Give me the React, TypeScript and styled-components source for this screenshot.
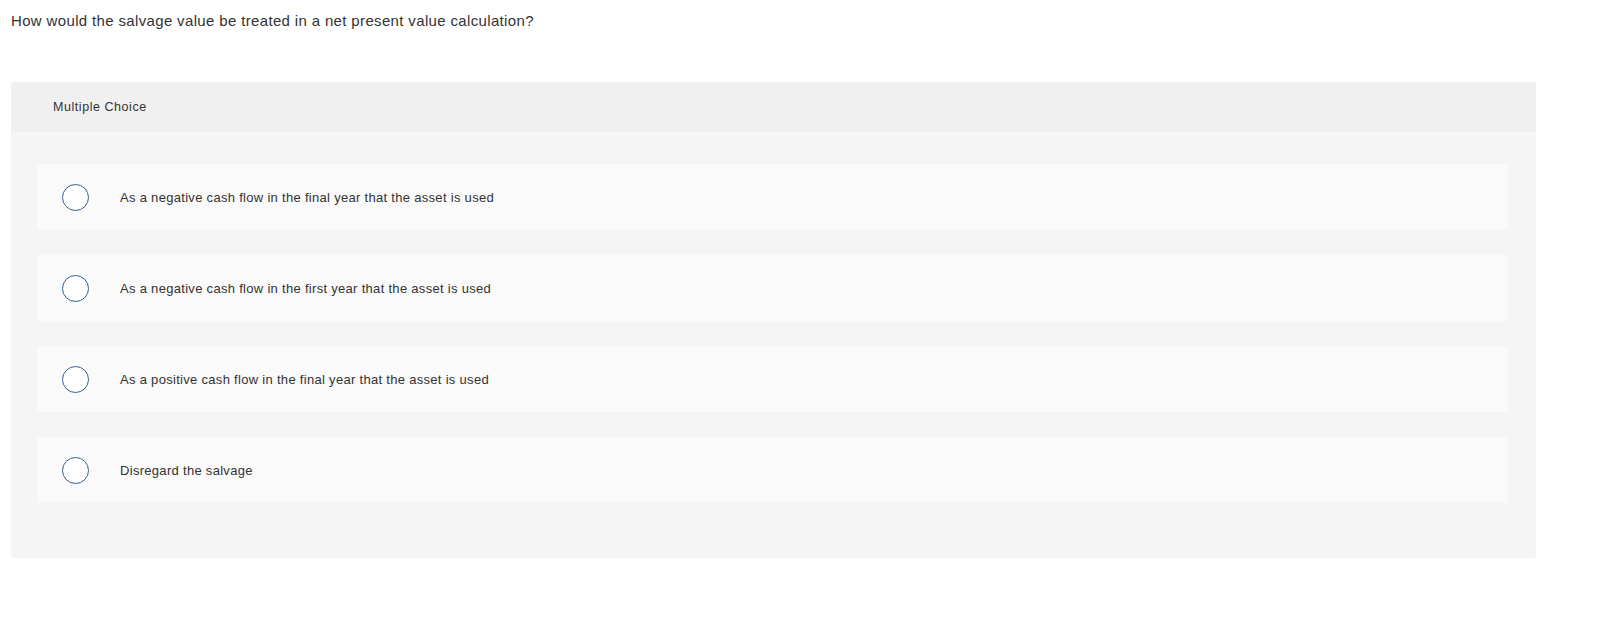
import styled, {createGlobalStyle} from 'styled-components'

const GlobalStyle = createGlobalStyle`
  body {
    margin: 0;
    background: #ffffff;
    font-family: "Liberation Sans", Arial, sans-serif;
    color: #333333;
  }
`

const Page = styled.main`
  padding: 11px 79px 0 11px;
`

const Question = styled.p`
  margin: 0 0 51px;
  font-size: 15px;
  line-height: 20px;
  letter-spacing: 0.35px;
  color: #333333;
`

const Panel = styled.section`
  background: #f5f5f5;
  border-radius: 2px;
  overflow: hidden;
  padding-bottom: 55px;
`

const Header = styled.div`
  height: 50px;
  display: flex;
  align-items: center;
  padding-left: 42px;
  background: #f0f0f0;
  font-size: 12.5px;
  letter-spacing: 0.55px;
  color: #333333;
`

const Choices = styled.ul`
  list-style: none;
  margin: 0;
  padding: 32px 28px 0 26px;
  display: flex;
  flex-direction: column;
  gap: 25px;
`

const Choice = styled.li`
  height: 66px;
  display: flex;
  align-items: center;
  gap: 31px;
  padding-left: 25px;
  background: #fafafa;
  border-radius: 3px;
  font-size: 13px;
  letter-spacing: 0.3px;
  color: #333333;
`

const Radio = styled.span`
  width: 25px;
  height: 25px;
  border: 1.5px solid #30608f;
  border-radius: 50%;
  background: #ffffff;
  flex: none;
`

const answers = [
  'As a negative cash flow in the final year that the asset is used',
  'As a negative cash flow in the first year that the asset is used',
  'As a positive cash flow in the final year that the asset is used',
  'Disregard the salvage',
]

export default function App() {
  return (
    <>
      <GlobalStyle />
      <Page>
        <Question>How would the salvage value be treated in a net present value calculation?</Question>
        <Panel>
          <Header>Multiple Choice</Header>
          <Choices>
            {answers.map((text) => (
              <Choice key={text}>
                <Radio />
                {text}
              </Choice>
            ))}
          </Choices>
        </Panel>
      </Page>
    </>
  )
}
